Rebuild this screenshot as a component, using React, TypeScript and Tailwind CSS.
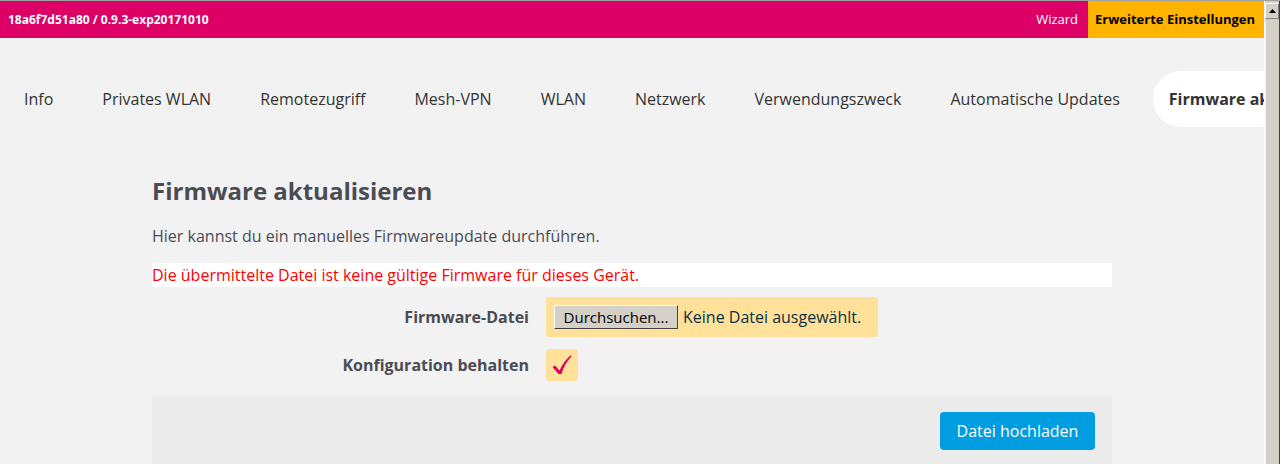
import React from 'react';

const TABS = [
  'Info',
  'Privates WLAN',
  'Remotezugriff',
  'Mesh-VPN',
  'WLAN',
  'Netzwerk',
  'Verwendungszweck',
  'Automatische Updates',
  'Firmware aktualisieren',
];

const ACTIVE_TAB = 'Firmware aktualisieren';

// Classic grey scrollbar drawn on the right edge of the window.
const FakeScrollbar: React.FC = () => (
  <div className="w-4 shrink-0 h-full bg-[#d4d0c8] border-l border-l-white flex flex-col pt-[2px] border-r border-r-[#404040]">
    <div className="h-4 w-full bg-[#d4d0c8] border border-t-white border-l-white border-r-[#808080] border-b-[#808080] flex items-center justify-center">
      <svg width="7" height="4" viewBox="0 0 7 4">
        <path d="M3.5 0 L7 4 L0 4 Z" fill="#000" />
      </svg>
    </div>
    <div className="flex-1 mt-[2px] border-l border-[#f0f0f0]" />
  </div>
);

export default function App() {
  return (
    <div
      className="w-[1280px] h-[464px] overflow-hidden flex bg-[#f2f2f2] border-t border-t-[#a0a0a0]"
      style={{ fontFamily: '"Open Sans", "Noto Sans", sans-serif' }}
    >
      <div className="flex-1 min-w-0 flex flex-col overflow-hidden">
        {/* Header bar */}
        <header className="h-[37px] shrink-0 flex items-stretch bg-[#dc0067] text-white">
          <div className="flex-1 flex items-center pl-2 text-[12px] font-bold">
            18a6f7d51a80 / 0.9.3-exp20171010
          </div>
          <div className="flex items-center px-[10px] text-[13px]">Wizard</div>
          <div className="flex items-center pl-[7px] pr-[7px] w-[176px] bg-[#ffb400] text-black text-[13px] font-bold">
            Erweiterte Einstellungen
          </div>
        </header>

        {/* Tabs */}
        <nav className="pt-[33px] shrink-0 flex items-center gap-[17px] pl-2 whitespace-nowrap overflow-hidden text-[16px] text-[#333]">
          {TABS.map((tab) => (
            <div
              key={tab}
              className={
                tab === ACTIVE_TAB
                  ? 'h-14 flex items-center px-4 rounded-full bg-white font-bold'
                  : 'h-14 flex items-center px-4'
              }
            >
              {tab}
            </div>
          ))}
        </nav>

        {/* Content */}
        <main className="w-[960px] mx-auto pt-[48px] text-[#4b4b53]">
          <h2 className="text-[24px] font-bold leading-8">Firmware aktualisieren</h2>
          <p className="mt-[17px] text-[16px] leading-6">
            Hier kannst du ein manuelles Firmwareupdate durchführen.
          </p>
          <div className="mt-[15px] h-6 bg-white text-[#ff0000] text-[16px] leading-6">
            Die übermittelte Datei ist keine gültige Firmware für dieses Gerät.
          </div>

          <div className="mt-[10px] flex items-center">
            <label className="w-[377px] text-right font-bold text-[16px]">Firmware-Datei</label>
            <div className="ml-[17px] h-10 w-[332px] rounded bg-[#ffe199] flex items-center pl-2 gap-[5px]">
              <div className="h-6 w-[124px] bg-[#d4d0c8] border border-t-white border-l-white border-r-[#404040] border-b-[#404040] flex items-center justify-center text-[15px] text-black">
                Durchsuchen...
              </div>
              <span className="text-[16px] text-[#0b2f45]">Keine Datei ausgewählt.</span>
            </div>
          </div>

          <div className="mt-3 flex items-center">
            <label className="w-[377px] text-right font-bold text-[16px]">Konfiguration behalten</label>
            <div className="ml-[17px] h-8 w-8 rounded bg-[#ffe199] flex items-center justify-center">
              <svg width="20" height="20" viewBox="0 0 20 20">
                <path
                  d="M0.5 12 L3 10.5 L7.5 15.5 C10.5 9 14 4.5 18.5 0.5 L19.5 1.5 C15 6 12 11 9.5 19 L6.5 19 Z"
                  fill="#dc0067"
                />
              </svg>
            </div>
          </div>

          <div className="mt-[14px] h-[80px] bg-[#ebebeb] flex justify-end items-start pt-[17px] pr-[17px]">
            <button className="h-[38px] w-[155px] rounded-sm bg-[#009ee0] text-white text-[16px]">
              Datei hochladen
            </button>
          </div>
        </main>
      </div>
      <FakeScrollbar />
    </div>
  );
}
